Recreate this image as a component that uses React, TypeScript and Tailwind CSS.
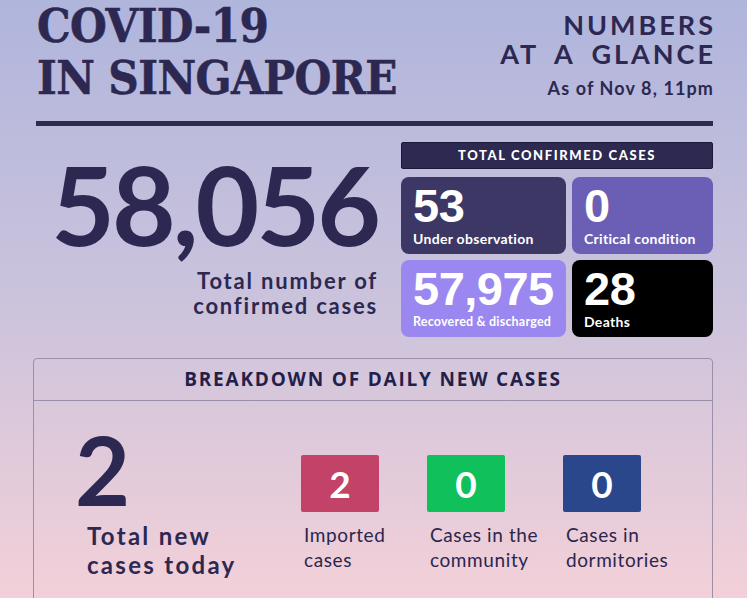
import React from "react";

const sans = "font-['Lato','Noto_Sans',sans-serif]";

export default function App() {
  return (
    <div className="w-[747px] h-[598px] overflow-hidden bg-gradient-to-b from-[#b0b5dc] via-[#cbc3dc] to-[#f3d0d8] text-[#2c2851]">
      <div className="pl-[36px] pr-[34px]">
        {/* Header */}
        <div className="flex justify-between items-start">
          <h1 className="font-['DejaVu_Serif_Condensed','DejaVu_Serif',serif] font-stretch-condensed font-bold text-[47px] leading-[52px] tracking-[-0.6px] pl-[1px] [-webkit-text-stroke:0.5px_#2c2851]">
            <div>COVID-19</div>
            <div>IN SINGAPORE</div>
          </h1>
          <div className={`${sans} text-right mt-[10px]`}>
            <div className="text-[27px] leading-[29px] font-bold tracking-[3px] mr-[-3px]">NUMBERS</div>
            <div className="text-[27px] leading-[29px] font-bold tracking-[3px] mr-[-3px] [word-spacing:7px]">AT A GLANCE</div>
            <div className="text-[18px] leading-[22px] font-bold tracking-[1.1px] mt-[9px] mr-[-1px]">As of Nov 8, 11pm</div>
          </div>
        </div>
        <div className="h-[5px] bg-[#2d2950] mt-[17px]" />

        {/* Totals */}
        <div className="flex mt-[16px]">
          <div className={`${sans} w-[340px] text-right`}>
            <div className="text-[110px] leading-[110px] font-bold tracking-[-3px] mt-[6px] mr-[-2px]">58,056</div>
            <div className="text-[22px] leading-[25px] font-bold tracking-[1.8px] mt-[10px] mr-[-2px]">
              <div>Total number of</div>
              <div>confirmed cases</div>
            </div>
          </div>
          <div className="ml-[25px] w-[312px]">
            <div className={`${sans} h-[27px] bg-[#2d2950] border border-[#1c1938] rounded-[2px] flex items-center justify-center text-white text-[13px] font-black tracking-[1.6px]`}>
              TOTAL CONFIRMED CASES
            </div>
            <div className="grid grid-cols-[165px_141px] gap-[6px] mt-[8px]">
              <Card color="bg-[#3d3766]" num="53" label="Under observation" />
              <Card color="bg-[#6b5fb5]" num="0" label="Critical condition" />
              <Card color="bg-[#9a88f0]" num="57,975" label="Recovered & discharged" small />
              <Card color="bg-black" num="28" label="Deaths" />
            </div>
          </div>
        </div>
      </div>

      {/* Breakdown */}
      <div className="ml-[33px] w-[680px] mt-[21px] border border-[#9b8faa] rounded-[4px] h-[400px]">
        <div className="h-[42px] border-b border-[#9b8faa] flex items-center justify-center font-['Open_Sans',sans-serif] font-bold text-[19px] tracking-[1.8px] text-[#241f4a]">
          BREAKDOWN OF DAILY NEW CASES
        </div>
        <div className="flex pt-[21px]">
          <div className={`${sans} ml-[41px] w-[226px]`}>
            <div className="text-[95px] leading-[95px] font-bold">2</div>
            <div className="ml-[12px] mt-[4px] text-[24px] leading-[29px] font-bold tracking-[2.3px]">
              <div>Total new</div>
              <div>cases today</div>
            </div>
          </div>
          <div className="flex pt-[33px]">
            <Mini color="bg-[#c24268]" num="2" l1="Imported" l2="cases" w="w-[126px]" />
            <Mini color="bg-[#10c05a]" num="0" l1="Cases in the" l2="community" w="w-[136px]" />
            <Mini color="bg-[#2b478c]" num="0" l1="Cases in" l2="dormitories" w="w-[130px]" />
          </div>
        </div>
      </div>
    </div>
  );
}

function Card({ color, num, label, small }: { color: string; num: string; label: string; small?: boolean }) {
  return (
    <div className={`${color} h-[77px] rounded-[8px] text-white px-[12px] pt-[5px]`}>
      <div className="font-['Liberation_Sans',Arial,sans-serif] font-bold text-[47px] leading-[47px] tracking-[-0.5px]">{num}</div>
      <div className={`${sans} font-bold mt-[1px] ${small ? "text-[12.5px] tracking-[0.2px]" : "text-[14px] tracking-[0.3px]"} leading-[18px]`}>
        {label}
      </div>
    </div>
  );
}

function Mini({ color, num, l1, l2, w }: { color: string; num: string; l1: string; l2: string; w: string }) {
  return (
    <div className={w}>
      <div className={`${color} w-[78px] h-[57px] rounded-[2px] flex items-center justify-center text-white ${sans} font-bold text-[37px]`}>
        {num}
      </div>
      <div className={`${sans} text-[19px] leading-[25px] tracking-[0.6px] mt-[10px] ml-[3px] text-[#2a2650]`}>
        <div>{l1}</div>
        <div>{l2}</div>
      </div>
    </div>
  );
}
